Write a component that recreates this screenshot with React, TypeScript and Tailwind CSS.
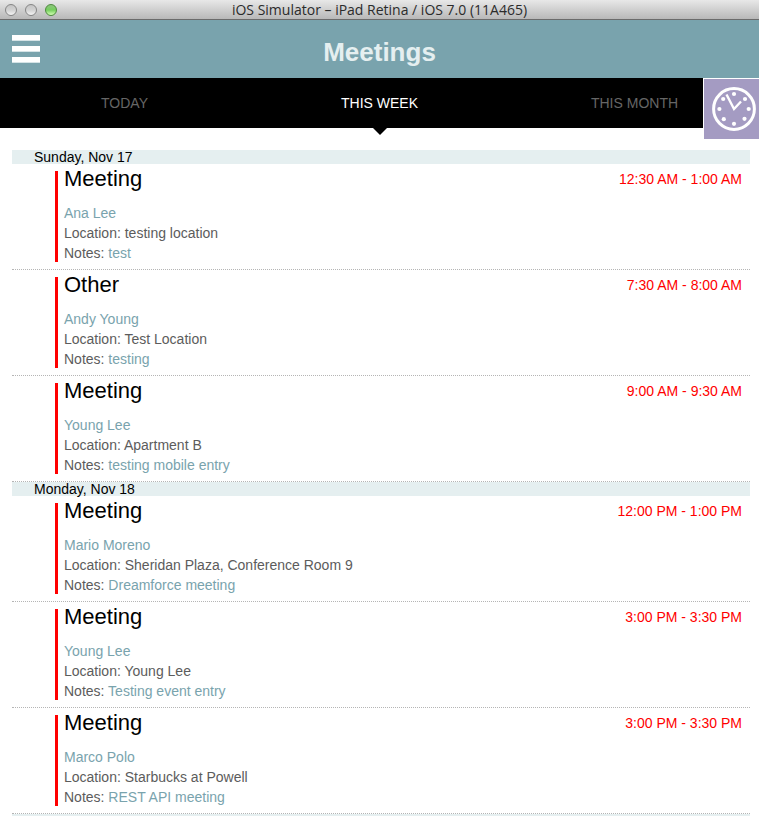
type Meeting = {
  title: string;
  time: string;
  contact: string;
  location: string;
  notes: string;
};

type Day = {
  date: string;
  meetings: Meeting[];
};

const tabs = ['TODAY', 'THIS WEEK', 'THIS MONTH'];

const days: Day[] = [
  {
    date: 'Sunday, Nov 17',
    meetings: [
      { title: 'Meeting', time: '12:30 AM - 1:00 AM', contact: 'Ana Lee', location: 'testing location', notes: 'test' },
      { title: 'Other', time: '7:30 AM - 8:00 AM', contact: 'Andy Young', location: 'Test Location', notes: 'testing' },
      { title: 'Meeting', time: '9:00 AM - 9:30 AM', contact: 'Young Lee', location: 'Apartment B', notes: 'testing mobile entry' },
    ],
  },
  {
    date: 'Monday, Nov 18',
    meetings: [
      { title: 'Meeting', time: '12:00 PM - 1:00 PM', contact: 'Mario Moreno', location: 'Sheridan Plaza, Conference Room 9', notes: 'Dreamforce meeting' },
      { title: 'Meeting', time: '3:00 PM - 3:30 PM', contact: 'Young Lee', location: 'Young Lee', notes: 'Testing event entry' },
      { title: 'Meeting', time: '3:00 PM - 3:30 PM', contact: 'Marco Polo', location: 'Starbucks at Powell', notes: 'REST API meeting' },
    ],
  },
];

function WindowButton({ name, green }: { name: string; green?: boolean }) {
  return (
    <button
      aria-label={name}
      className={
        green
          ? 'h-3 w-3 rounded-full border border-[#4c8a3c] bg-linear-to-b from-[#8cc47c] via-[#74cf5c] to-[#d2ffb4]'
          : 'h-3 w-3 rounded-full border border-[#858585] bg-linear-to-b from-[#c4c4c4] via-[#d2d2d2] to-[#f4f4f4]'
      }
    />
  );
}

function TitleBar() {
  return (
    <div className="relative flex h-5 shrink-0 items-center justify-center border-b border-[#6b6b6b] bg-linear-to-b from-[#e8e8e8] to-[#b8b8b8]">
      <div className="absolute inset-y-0 left-[5px] flex items-center gap-2">
        <WindowButton name="Close" />
        <WindowButton name="Minimize" />
        <WindowButton name="Zoom" green />
      </div>
      <span className="font-['Open_Sans','Noto_Sans',sans-serif] text-sm leading-[18px] text-[#2b2b2b]">
        iOS Simulator – iPad Retina / iOS 7.0 (11A465)
      </span>
    </div>
  );
}

function ClockIcon() {
  return (
    <svg viewBox="0 0 44 44" className="h-11 w-11" fill="none" stroke="#fff" aria-hidden="true">
      <circle cx="22" cy="22" r="20.4" strokeWidth="3" />
      <path d="M14.5 7.5 22 22l7-7.5" strokeWidth="2.4" />
      <g fill="#fff" stroke="none">
        <circle cx="22" cy="7" r="2.1" />
        <circle cx="33" cy="12" r="2.1" />
        <circle cx="36.7" cy="22" r="2.1" />
        <circle cx="32.5" cy="31.8" r="2.1" />
        <circle cx="22" cy="36.8" r="2.1" />
        <circle cx="11.8" cy="32.2" r="2.1" />
        <circle cx="7.4" cy="22" r="2.1" />
        <circle cx="11.2" cy="12" r="2.1" />
      </g>
    </svg>
  );
}

function MeetingItem({ meeting }: { meeting: Meeting }) {
  return (
    <li className="border-b border-dotted border-[#b5b5b5] py-[7px] pr-2 pl-[43px]">
      <div className="flex items-start justify-between border-l-3 border-[#f00] pl-[6px]">
        <div className="-mb-px">
          <h3 className="mb-4 text-[22px] leading-4 text-black">{meeting.title}</h3>
          <a href="#contact" className="block text-[#79a3ad]">{meeting.contact}</a>
          <p>Location: {meeting.location}</p>
          <p>
            Notes: <span className="text-[#79a3ad]">{meeting.notes}</span>
          </p>
        </div>
        <time className="leading-4 text-[#f00]">{meeting.time}</time>
      </div>
    </li>
  );
}

export default function App() {
  return (
    <div className="flex h-screen flex-col overflow-hidden bg-white font-['Liberation_Sans',Arial,sans-serif] text-sm text-[#5c5c5c]">
      <TitleBar />

      <header className="grid h-[58px] shrink-0 grid-cols-[1fr_auto_1fr] items-center bg-[#79a3ad] px-3">
        <button aria-label="Menu" className="flex w-7 flex-col gap-[5px]">
          <span className="h-[6px] border-b border-[#d5e3e6] bg-white" />
          <span className="h-[6px] border-b border-[#d5e3e6] bg-white" />
          <span className="h-[6px] border-b border-[#d5e3e6] bg-white" />
        </button>
        <h1 className="pt-[6px] text-[26px] leading-8 font-bold text-[#e5eff0]">Meetings</h1>
      </header>

      <div className="relative shrink-0">
        <nav className="-mx-[3px] grid h-[50px] grid-cols-3 bg-black">
          {tabs.map((tab) => (
            <button
              key={tab}
              className={tab === 'THIS WEEK' ? 'relative text-white' : 'relative text-[#666]'}
            >
              {tab}
              {tab === 'THIS WEEK' && (
                <span className="absolute top-full left-1/2 -translate-x-1/2 border-x-7 border-t-7 border-x-transparent border-t-black" />
              )}
            </button>
          ))}
        </nav>
        <button
          aria-label="Log time"
          className="absolute top-0 right-0 flex h-[61px] w-14 items-center justify-end border-t border-l border-white bg-[#a49bc2] pr-[3px]"
        >
          <ClockIcon />
        </button>
      </div>

      <main className="mt-[22px] mr-[9px] ml-3">
        {days.map((day) => (
          <section key={day.date}>
            <h2 className="bg-[#e5eff0] pl-[22px] leading-[14px] text-black">{day.date}</h2>
            <ul className="leading-5">
              {day.meetings.map((meeting, i) => (
                <MeetingItem key={i} meeting={meeting} />
              ))}
            </ul>
          </section>
        ))}
        <div className="h-4 bg-[#e5eff0]" />
      </main>
    </div>
  );
}
